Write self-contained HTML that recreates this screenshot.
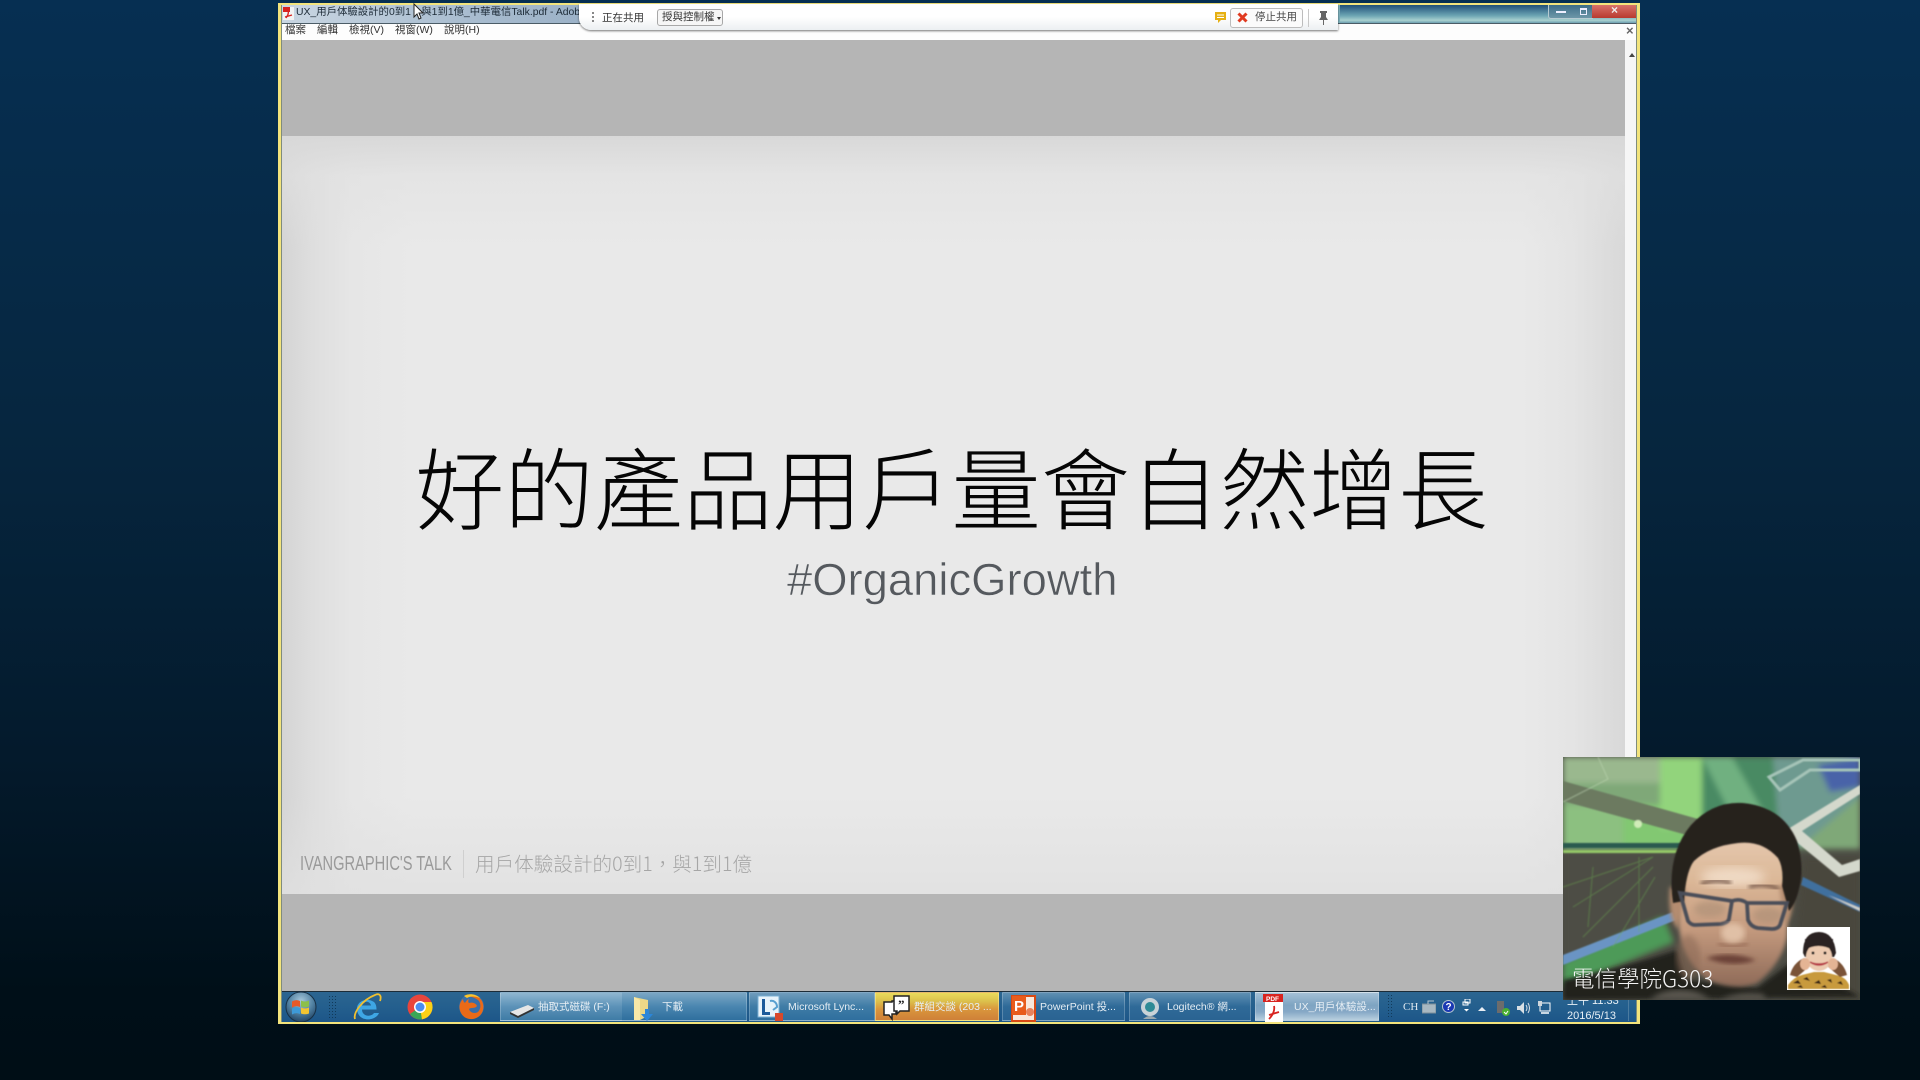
<!DOCTYPE html>
<html lang="zh-Hant"><head><meta charset="utf-8"><title>好的產品用戶量會自然增長</title>
<style>
html,body{margin:0;padding:0}
body{width:1920px;height:1080px;overflow:hidden;position:relative;background:linear-gradient(180deg,#062f52 0%,#06263f 40%,#041a2c 70%,#000f18 92%,#000e16 100%);font-family:"Liberation Sans","Noto Sans CJK TC",sans-serif}
.a{position:absolute;white-space:nowrap}
.tb{position:absolute;top:992px;height:29px;color:#e6eef4;font-size:10.5px;line-height:29px;box-sizing:border-box;border:1px solid rgba(255,255,255,.22);border-top-color:rgba(255,255,255,.4);background:linear-gradient(180deg,rgba(255,255,255,.2),rgba(255,255,255,.06) 45%,rgba(0,0,0,.05))}
.tb span{position:absolute;top:0;white-space:nowrap}
.tb svg,.ic{position:absolute}
.m{position:absolute;top:23px;font-size:10.5px;line-height:15px;color:#333;white-space:nowrap}
</style></head><body>

<!-- window frame -->
<div class="a" style="left:278px;top:3px;width:1362px;height:1021px;background:#f3e47c"></div>
<div class="a" style="left:281px;top:5px;width:1356px;height:1017px;background:#b5b5b5"></div>
<div class="a" style="left:281px;top:5px;width:1px;height:1017px;background:#7f8c7c"></div>
<div class="a" style="left:1636px;top:5px;width:1px;height:1017px;background:#7f8c7c"></div>
<!-- title bar -->
<div class="a" style="left:282px;top:5px;width:1354px;height:18px;background:linear-gradient(90deg,#c9d6e2 0,#a8bccf 14%,#8fa7bf 30%,#3d6d8a 62%,#7fb3bf 78%,#a4c9cc 84%,#3a6a8c 94%,#3a6a8c 100%)"></div>
<div class="a" style="left:1340px;top:5px;width:296px;height:18px;background:linear-gradient(180deg,#1f4f78,#6ea6b4 60%,#a8d0cf 85%,#6d9fb0)"></div>
<svg class="a" style="left:283px;top:7px" width="11" height="13"><rect width="11" height="13" fill="#f3f3f3"/><rect x="0" y="0" width="7" height="5" fill="#d8231f"/><path d="M3 11C5 8 6 6 5 4M2 10 9 8" stroke="#d8231f" stroke-width="1.3" fill="none"/></svg>
<div class="a" style="left:296px;top:5px;font-size:10.4px;line-height:16px;color:#1c2a36;width:283px;overflow:hidden">UX_用戶体驗設計的0到1，與1到1億_中華電信Talk.pdf - Adobe</div>
<!-- caption buttons -->
<div class="a" style="left:1548px;top:5px;width:43px;height:13px;border:1px solid #b6cbd2;border-top:0;border-radius:0 0 0 3px;background:linear-gradient(#3d6d88,#6d97a8)"></div>
<div class="a" style="left:1556px;top:11px;width:10px;height:2px;background:#eef"></div>
<div class="a" style="left:1580px;top:8px;width:5px;height:4px;border:1px solid #eef;border-top-width:2px"></div>
<div class="a" style="left:1592px;top:5px;width:44px;height:13px;background:linear-gradient(#d8726a,#b83a2f)"></div>
<div class="a" style="left:1611px;top:3px;font-size:12px;line-height:14px;font-weight:bold;color:#eee">×</div>
<!-- menu -->
<div class="a" style="left:282px;top:23px;width:1354px;height:17px;background:#fdfdfd;border-top:1px solid #4b5c66;box-sizing:border-box"></div>
<div class="m" style="left:285px">檔案</div><div class="m" style="left:317px">編輯</div><div class="m" style="left:349px">檢視(V)</div><div class="m" style="left:395px">視窗(W)</div><div class="m" style="left:444px">說明(H)</div>
<div class="a" style="left:1626px;top:24px;font-size:13px;line-height:14px;color:#666;font-weight:bold">×</div>
<!-- scrollbar -->
<div class="a" style="left:1625px;top:40px;width:11px;height:720px;background:#f6f6f6"></div>
<div class="a" style="left:1629px;top:53px;width:0;height:0;border:3px solid transparent;border-bottom:4px solid #444;border-top:0"></div>

<!-- slide -->
<div class="a" style="left:282px;top:136px;width:1343px;height:758px;background:#e9e9e9;overflow:hidden">
 <div class="a" style="inset:0;background:linear-gradient(90deg,#d4d4d4 0,#dedede 30px,#e6e6e6 70px,#e9e9e9 130px,#e9e9e9 1240px,#e4e4e4 1290px,#d8d8d8 100%)"></div>
 <div class="a" style="inset:0;background:linear-gradient(180deg,#d8d8d8 0,rgba(225,225,225,.6) 40px,rgba(233,233,233,0) 110px,rgba(233,233,233,0) 660px,rgba(224,224,224,.8) 100%)"></div>
</div>
<div class="a" style="left:415px;top:432px;font-size:89.4px;line-height:104px;font-weight:300;color:#050505;font-family:'Noto Sans CJK TC','Liberation Sans',sans-serif">好的產品用戶量會自然增長</div>
<div class="a" style="left:787px;top:553px;font-size:45.4px;line-height:54px;color:#55595e;-webkit-text-stroke:.55px #e9e9e9">#OrganicGrowth</div>
<div class="a" style="left:300px;top:853px;font-size:20px;line-height:22px;color:#9a9a9a;transform:scaleX(.733);transform-origin:0 0">IVANGRAPHIC'S TALK</div>
<div class="a" style="left:463px;top:850px;width:1px;height:28px;background:#cfcfcf"></div>
<div class="a" style="left:475px;top:850px;font-size:19.6px;line-height:26px;color:#a6a6a6;font-weight:300;font-family:'Noto Sans CJK TC','Liberation Sans',sans-serif">用戶体驗設計的0到1，與1到1億</div>

<!-- taskbar -->
<div class="a" style="left:282px;top:991px;width:1354px;height:31px;background:linear-gradient(180deg,#2c6590,#245f8e 50%,#1d5688);border-top:1px solid #1c2c38;box-sizing:border-box"></div>
<svg class="a" style="left:282px;top:991px" width="120" height="31">
 <defs><radialGradient id="o" cx=".5" cy=".3" r=".75"><stop offset="0" stop-color="#a8c8dc"/><stop offset=".55" stop-color="#4f7fa0"/><stop offset="1" stop-color="#1c3c5c"/></radialGradient></defs>
 <circle cx="19" cy="16" r="15" fill="url(#o)" stroke="#173046"/>
 <path d="M10 10.500q4-2.500 8-.5v6q-4-2-8 .5z" fill="#e85a28"/><path d="M19 9.500q4 2 8 0v6q-4 1.500-8 0z" fill="#8cc04a"/><path d="M10 17.500q4-2.500 8-.5v6q-4-2-8 .5z" fill="#3e9ad8"/><path d="M19 16.500q4 2 8 0v6q-4 1.500-8 0z" fill="#f4c430"/>
 <g fill="#113a5a"><path d="M47 5h1v1h-1zM50 5h1v1h-1zM53 5h1v1h-1zM47 8h1v1h-1zM50 8h1v1h-1zM53 8h1v1h-1zM47 11h1v1h-1zM50 11h1v1h-1zM53 11h1v1h-1zM47 14h1v1h-1zM50 14h1v1h-1zM53 14h1v1h-1zM47 17h1v1h-1zM50 17h1v1h-1zM53 17h1v1h-1zM47 20h1v1h-1zM50 20h1v1h-1zM53 20h1v1h-1zM47 23h1v1h-1zM50 23h1v1h-1zM53 23h1v1h-1zM47 26h1v1h-1zM50 26h1v1h-1zM53 26h1v1h-1z"/></g>
</svg>
<!-- IE -->
<svg class="a" style="left:352px;top:992px" width="30" height="30"><path d="M22 17.500H10c0 7 9 8 12 3.500h5c-3 8-20 10-22-3C4 9 15 5 22 10c2 2 2.500 4.500 2.500 7.500z M10 13.500h9c-1-5-8-5-9 0z" fill="#3ea6e4" fill-rule="evenodd"/><path d="M3 27C1 21 10 8 23 3c4-2 7 0 5 6" fill="none" stroke="#f0c030" stroke-width="1.800"/></svg>
<!-- Chrome -->
<svg class="a" style="left:407px;top:994px" width="26" height="26"><circle cx="13" cy="13" r="12.500" fill="#e8453c"/><path d="M13 13 3 20A12.500 12.500 0 0 0 15 25.400z" fill="#3aa757"/><path d="M13 13 15 25.400A12.500 12.500 0 0 0 24.500 8H13z" fill="#fcd116"/><circle cx="13" cy="13" r="6" fill="#fff"/><circle cx="13" cy="13" r="4.500" fill="#4a8df0"/></svg>
<!-- Firefox -->
<svg class="a" style="left:458px;top:993px" width="27" height="27"><circle cx="13.500" cy="13.500" r="12.500" fill="#3a6ea8"/><path d="M6 3c5-3 14-2 18 5 3 6 1 13-4 16-6 4-14 2-17-4C0 14 2 9 5 6c0 2 1 3 2 4 1-2 3-4 4-4-1 2-1 3 0 4 3-1 7 0 8 3-2 3-6 1-8 3 1 4 6 5 9 3 3-3 3-8 1-11-3-3-8-5-15-5z" fill="#ea6a18"/><path d="M6 3c5-3 12-2 16 2-5-2-10-2-13 0z" fill="#f9c62c"/></svg>

<!-- task buttons -->
<div class="tb" style="left:500px;width:122px;background:linear-gradient(180deg,#8fb6d0,#5c92b8 50%,#3f7ca6);border-right:0"><svg style="left:8px;top:10px" width="26" height="15"><path d="M1 9 19 2l6 3-16 8z" fill="#e6e6e6"/><path d="M1 9l8 4 16-8v2L9 15 1 11z" fill="#333"/></svg><span style="left:37px">抽取式磁碟 (F:)</span></div>
<div class="tb" style="left:622px;width:125px;background:linear-gradient(180deg,#7aa6c4,#4a86b0 50%,#2f6f9e);border-left:0"><svg style="left:10px;top:2px" width="24" height="27"><path d="M2 2l14 3v16l-8 4H2z" fill="#ecd888"/><path d="M2 2l6 3v20H2z" fill="#f8e8a8"/><path d="M13 14h4v5h4l-6 7-6-7h4z" fill="#2c86d8"/></svg><span style="left:40px">下載</span></div>
<div class="tb" style="left:749px;width:126px;background:linear-gradient(180deg,#6f9cbc,#3f7ca6 50%,#2f6f9e)"><svg style="left:7px;top:2px" width="27" height="27"><rect x="1" y="1" width="21" height="21" fill="#e8f3fa" stroke="#7ab0d4"/><path d="M5 4h3v13h5v3H5z" fill="#1c5a9a"/><path d="M13 6c4-1 7 2 7 6l-4 3" stroke="#5aa0d0" stroke-width="2" fill="none"/><rect x="18" y="18" width="8" height="8" fill="#d8492c"/></svg><span style="left:38px">Microsoft Lync...</span></div>
<div class="tb" style="left:875px;width:124px;border-color:rgba(255,240,160,.5);background:linear-gradient(180deg,#e9db5c 0,#dcc14c 30%,#d9963c 60%,#cf8038 100%)"><svg style="left:6px;top:1px" width="28" height="29"><path d="M10 7h4v13h-4v5l-3-4H2V8h8z" fill="#fff" stroke="#222" stroke-width="1.500"/><path d="M13 2h14v15H18l-3 3v-3h-3V2z" fill="#fff" stroke="#222" stroke-width="1.500"/><text x="16" y="15" font-size="13" font-weight="bold" fill="#222" font-family="Liberation Serif">”</text></svg><span style="left:38px">群組交談 (203 ...</span></div>
<div class="tb" style="left:1002px;width:123px;background:linear-gradient(180deg,#5f8fb2,#2f6a98 50%,#2a6392)"><svg style="left:8px;top:2px" width="26" height="27"><rect x="1" y="1" width="23" height="25" fill="#f9e8dc" stroke="#d84a14" stroke-width="2"/><rect x="1" y="1" width="14" height="19" fill="#e85c1c"/><text x="3" y="16" font-size="15" font-weight="bold" fill="#fff" font-family="Liberation Sans">P</text><circle cx="19" cy="17" r="4" fill="#e8825c"/></svg><span style="left:37px">PowerPoint 投...</span></div>
<div class="tb" style="left:1129px;width:122px;background:linear-gradient(180deg,#5f8fb2,#2f6a98 50%,#2a6392)"><svg style="left:10px;top:5px" width="20" height="22"><circle cx="10" cy="9" r="9" fill="#c8d2d8"/><circle cx="10" cy="9" r="5" fill="#2e8a96"/><path d="M3 21q7-6 14 0z" fill="#9aa8b0"/></svg><span style="left:37px">Logitech® 網...</span></div>
<div class="tb" style="left:1255px;width:124px;background:linear-gradient(180deg,#a4c0d6,#7ea4c2 45%,#86a8c6 70%,#b8cfdf)"><svg style="left:7px;top:0" width="22" height="29"><rect x="2" y="2" width="18" height="27" fill="#fff"/><rect y="1" width="20" height="8" fill="#d8231f"/><text x="3" y="8" font-size="6.500" font-weight="bold" fill="#fff" font-family="Liberation Sans">PDF</text><path d="M6 26c4-4 6-9 5-13M6 22l10-3" stroke="#d8231f" stroke-width="1.800" fill="none"/></svg><span style="left:38px">UX_用戶体驗設...</span></div>

<!-- tray -->
<svg class="a" style="left:1388px;top:992px" width="6" height="30"><path fill="#113a5a" d="M0 3h1v1H0zM3 3h1v1H3zM0 6h1v1H0zM3 6h1v1H3zM0 9h1v1H0zM3 9h1v1H3zM0 12h1v1H0zM3 12h1v1H3zM0 15h1v1H0zM3 15h1v1H3zM0 18h1v1H0zM3 18h1v1H3zM0 21h1v1H0zM3 21h1v1H3zM0 24h1v1H0zM3 24h1v1H3z"/></svg>
<div class="a" style="left:1403px;top:999px;font-size:11px;line-height:16px;color:#dfe9f0;font-family:'Liberation Serif',serif">CH</div>
<svg class="a" style="left:1422px;top:1000px" width="14" height="14"><rect x="0" y="4" width="14" height="9" fill="#a8b8c2" stroke="#7d8e98"/><path d="M6 4V1h6" stroke="#b4c4ce" fill="none"/></svg>
<svg class="a" style="left:1442px;top:1000px" width="13" height="13"><circle cx="6.500" cy="6.500" r="6" fill="#1a38b4" stroke="#b4c4ce"/><text x="3.500" y="10" font-size="10" font-weight="bold" fill="#fff" font-family="Liberation Sans">?</text></svg>
<svg class="a" style="left:1462px;top:999px" width="9" height="16"><rect x="3" y="0" width="5" height="4" fill="none" stroke="#fff"/><rect x="1" y="3" width="5" height="3" fill="none" stroke="#fff"/><path d="M2 10h5l-2.500 2.500z" fill="#fff"/></svg>
<div class="a" style="left:1478px;top:1007px;width:0;height:0;border:4px solid transparent;border-bottom:4px solid #e8eef4;border-top:0"></div>
<svg class="a" style="left:1496px;top:1001px" width="14" height="15"><rect x="1" y="0" width="7" height="12" fill="#6c6c6c"/><circle cx="10" cy="11" r="4" fill="#4ab030"/><path d="M8 11l2 2 2-3" stroke="#fff" fill="none"/></svg>
<svg class="a" style="left:1516px;top:1001px" width="14" height="14"><path d="M1 5h3l4-4v12l-4-4H1z" fill="#d8dfe4"/><path d="M10 4q2 3 0 6M12 2q3 5 0 10" stroke="#d8dfe4" fill="none"/></svg>
<svg class="a" style="left:1537px;top:1001px" width="14" height="14"><rect x="3" y="2" width="10" height="8" fill="none" stroke="#fff"/><rect x="1" y="0" width="4" height="5" fill="#cfd6dc"/><path d="M4 12h8" stroke="#fff" stroke-width="1.500"/></svg>
<div class="a" style="left:1567px;top:994px;font-size:11px;line-height:14px;color:#e8f0f6">上午 11:33</div>
<div class="a" style="left:1567px;top:1008px;font-size:11px;line-height:16px;color:#e8f0f6">2016/5/13</div>
<div class="a" style="left:1628px;top:992px;width:1px;height:29px;background:#4b7ba0"></div>

<!-- share bar -->
<div class="a" style="left:579px;top:4px;width:759px;height:26px;background:linear-gradient(180deg,#fff,#fff 50%,#eceff2);border-radius:0 0 0 12px;box-shadow:0 1px 2px rgba(0,0,0,.55)"></div>
<div class="a" style="left:592px;top:12px;width:2px;height:12px;background:repeating-linear-gradient(180deg,#888 0 2px,transparent 2px 4px)"></div>
<div class="a" style="left:602px;top:10px;font-size:10.5px;line-height:16px;color:#333">正在共用</div>
<div class="a" style="left:657px;top:9px;width:66px;height:17px;border:1px solid #a8a8a8;border-radius:3px;box-sizing:border-box;background:#f6f6f6;font-size:10.500px;line-height:15px;color:#333;padding-left:4px">授與控制權</div>
<div class="a" style="left:717px;top:17px;width:0;height:0;border:2px solid transparent;border-top:3px solid #333;border-bottom:0"></div>
<svg class="a" style="left:1215px;top:12px" width="11" height="12"><path d="M0 0h11v8H6l-3 3V8H0z" fill="#e6b012"/><path d="M2 3h7M2 5.500h7" stroke="#fff"/></svg>
<div class="a" style="left:1230px;top:8px;width:73px;height:20px;border:1px solid #bcbcbc;border-radius:3px;box-sizing:border-box;background:#fbfbfb"></div>
<svg class="a" style="left:1237px;top:12px" width="11" height="11"><path d="M1.500 1.500l8 8M9.500 1.500l-8 8" stroke="#e03a20" stroke-width="3"/></svg>
<div class="a" style="left:1255px;top:10px;font-size:10.500px;line-height:15px;color:#444">停止共用</div>
<div class="a" style="left:1308px;top:9px;width:1px;height:18px;background:#c8c8c8"></div>
<svg class="a" style="left:1318px;top:11px" width="11" height="15"><path d="M2 0h7v2H8v4l2 3H1l2-3V2H2zM5 9h1v5H5z" fill="#666"/></svg>

<!-- video -->
<svg class="a" style="left:1563px;top:757px" width="297" height="243" viewBox="0 0 297 243">
<defs>
<filter id="b0"><feGaussianBlur stdDeviation=".9"/></filter><filter id="b1"><feGaussianBlur stdDeviation="2"/></filter><filter id="b2"><feGaussianBlur stdDeviation="3"/></filter><filter id="b5"><feGaussianBlur stdDeviation="5"/></filter>
<linearGradient id="fc" x1="0" y1="0" x2="0" y2="1"><stop offset="0" stop-color="#e8ceb6"/><stop offset=".35" stop-color="#dcb898"/><stop offset=".65" stop-color="#c49a7e"/><stop offset="1" stop-color="#8e6a58"/></linearGradient>
</defs>
<rect width="297" height="243" fill="#4c4c44"/>
<g filter="url(#b2)">
 <rect width="297" height="92" fill="#7fa878"/>
 <path d="M0 0h100v26H0z" fill="#9ab88e"/>
 <path d="M0 48h97v42H0z" fill="#8cc080"/>
 <path d="M60 48h70v42H60z" fill="#82c872"/>
 <path d="M97 0h42v72H97z" fill="#92d47c"/>
 <path d="M139 0h90v90H139z" fill="#4a8a64"/>
 <path d="M139 0h30l40 70-30 10z" fill="#70b080"/>
 <path d="M210 0h87v40l-60 50h-20z" fill="#6e9a90"/>
 <path d="M255 8l42-8v30l-30 5z" fill="#4a64a8"/>
 <path d="M0 92h125v200H0z" fill="#4e4e44"/>
 <path d="M100 160 0 205v25l110-45z" fill="#4e9a58"/>
 <path d="M240 100h57v143h-70z" fill="#4a463c"/>
</g>
<g filter="url(#b0)">
 <path d="M0 24 135 62l-4 18L0 44z" fill="#6c7a60"/>
 <path d="M0 86h125v5H0z" fill="#2c5a50"/>
 <path d="M0 93h120v3H0z" fill="#94c868"/>
 <path d="M0 198 110 155l3 8L0 208z" fill="#6a94c4"/>
 <path d="M0 45 45 22 35 0" fill="none" stroke="#c4dcb8" stroke-width="1" opacity=".5"/>
 <g stroke="#6cb050" stroke-width="1" opacity=".45" fill="none"><path d="M10 150 90 100M20 180l70-70M0 130l90-30M50 190l42-70M76 100v75M30 110l-5 60"/></g>
 <circle cx="75" cy="67" r="4" fill="#d0ecb8"/>
 <path d="M225 72 297 28v9l-58 37 40 34 18-6v12l-21 6-56-46z" fill="#d4d8cc"/>
 <path d="M206 20 240 3h57v10h-50l-30 20z" fill="none" stroke="#a6c4b8" stroke-width="3"/>
 <path d="M240 120 297 148v7L238 128z" fill="#3f6f9e"/>
 <path d="M265 138l32 16v-3z" fill="#d4d4cc"/>
</g>
<!-- body -->
<path d="M0 243v-20q60-12 114-30l10 30 70 8 33-25q30 10 70 34z" fill="#23221e" filter="url(#b1)"/>
<path d="M87 243q10-10 30-10t30 10zM158 243q15-9 42-6l3 6z" fill="#5a5650" filter="url(#b2)"/>
<!-- face -->
<path d="M116 100q-6 55 4 90 10 25 28 34 25 10 46 2 25-20 30-46l3-80-20-30q-30-10-60 0z" fill="url(#fc)" filter="url(#b1)"/>
<path d="M107 130q-3 30 8 42l8-40zM228 130q5 25-6 38l-6-40z" fill="#b48c70" filter="url(#b1)"/>
<ellipse cx="125" cy="200" rx="12" ry="22" fill="#8c6a56" opacity=".55" filter="url(#b2)"/>
<ellipse cx="170" cy="120" rx="32" ry="10" fill="#f6e4d2" opacity=".75" filter="url(#b5)"/>
<!-- hair -->
<path d="M110 146q-7-48 18-78 22-24 52-22 40 4 54 38 8 26 2 48-3 14-10 22l-7-25q2-18-4-28-16-18-40-15-28 3-44 18-8 10-10 40z" fill="#28211e" filter="url(#b0)"/>
<!-- brows -->
<path d="M138 127q14-6 30-1" stroke="#6a4c3c" stroke-width="3.500" fill="none" filter="url(#b1)"/><path d="M186 130q15-5 30 2" stroke="#6a4c3c" stroke-width="3.500" fill="none" filter="url(#b1)"/>
<!-- glasses -->
<ellipse cx="147" cy="152" rx="16" ry="8" fill="#a88c74" opacity=".55" filter="url(#b2)"/>
<ellipse cx="205" cy="158" rx="15" ry="8" fill="#a88c74" opacity=".55" filter="url(#b2)"/>
<g fill="none" stroke="#4a4e58" stroke-width="3.800" filter="url(#b0)"><path d="M117 136l52 8-3 18q-1 4-8 5l-26 1q-4 0-7-4z"/><path d="M184 146l40 0-7 22q-2 4-8 4l-14-1q-7-1-10-8z"/><path d="M169 144q8-3 15 2"/></g>
<!-- nose / mouth -->
<ellipse cx="170" cy="176" rx="12" ry="10" fill="#e6c8ae" opacity=".85" filter="url(#b2)"/>
<path d="M155 186q14 7 30 0" stroke="#9a6e58" stroke-width="3" fill="none" filter="url(#b1)"/>
<path d="M143 201q24-8 50 2-24 9-50-2z" fill="#6c4238" filter="url(#b1)"/>
</svg>
<div class="a" style="left:1572px;top:963px;font-size:22.500px;line-height:30px;color:#f4f4f4;font-family:'Noto Sans CJK TC','Liberation Sans',sans-serif;font-weight:300">電信學院G303</div>
<!-- thumb -->
<svg class="a" style="left:1787px;top:927px" width="63" height="63" viewBox="0 0 63 63">
<defs><filter id="b4"><feGaussianBlur stdDeviation=".5"/></filter></defs>
<rect width="63" height="63" fill="#fff"/>
<g filter="url(#b4)">
<path d="M1 62v-4q6-8 14-10l12-3h10l12 3q10 2 13 10v4z" fill="#c89a3c"/>
<path d="M6 56l5-3 3 4zM16 52l4-2 3 4zM27 56l5-3 2 4zM40 53l4-1 1 4zM50 56l4-2 2 4zM10 60l4-2 2 3zM34 60l4-2 2 3z" fill="#3a2616"/>
<path d="M3 48q3-12 14-17l7 7-14 12zM60 48q-3-12-14-17l-7 7 14 12z" fill="#7a5238"/>
<path d="M16 26q0-21 16-21 15 0 17 21l-2 4H18z" fill="#2c2220"/>
<ellipse cx="32" cy="30" rx="13" ry="14" fill="#eccab0"/>
<path d="M18 23q13-8 28 0V12H18z" fill="#2c2220"/>
<circle cx="26" cy="26" r="1.500" fill="#222"/><circle cx="38" cy="26" r="1.500" fill="#222"/>
<path d="M23 35q9 4 18 0-9 6-18 0z" stroke="#b84048" stroke-width="1.500" fill="#fff"/>
<ellipse cx="18" cy="37" rx="5" ry="6" fill="#e4b494"/><ellipse cx="46" cy="37" rx="5" ry="6" fill="#e4b494"/>
</g></svg>

<!-- cursor -->
<svg class="a" style="left:413px;top:3px" width="12" height="18"><path d="M1 1v13l3-3 2 5 2-1-2-5h4z" fill="#fff" stroke="#222"/></svg>
</body></html>
